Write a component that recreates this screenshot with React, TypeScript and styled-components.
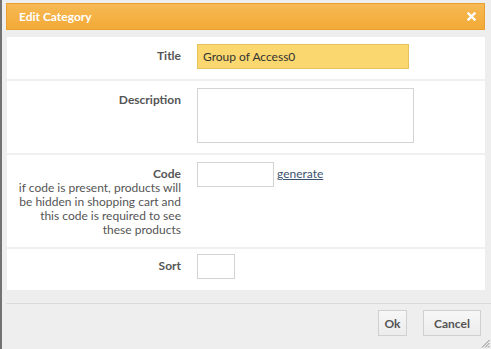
import React from "react";
import styled, { createGlobalStyle } from "styled-components";

const GlobalStyle = createGlobalStyle`
  html, body {
    margin: 0;
    padding: 0;
    background: #eeeeee;
  }
  body {
    font-family: Lato, "Open Sans", "Liberation Sans", sans-serif;
    font-size: 12px;
    color: #555;
  }
`;

function App(): JSX.Element {
  return (
    <React.Fragment>
      <GlobalStyle />
      <Frame>
        <Header>
          <HeaderTitle>Edit Category</HeaderTitle>
          <CloseButton aria-label="close">
            <svg width="9" height="9" viewBox="0 0 9 9">
              <path
                d="M1.5 1.5 L7.5 7.5 M7.5 1.5 L1.5 7.5"
                stroke="#fff"
                strokeWidth="2.4"
                strokeLinecap="square"
              />
            </svg>
          </CloseButton>
        </Header>

        <Panel>
          <Row>
            <LabelCell>
              <Label>Title</Label>
            </LabelCell>
            <FieldCell>
              <TextInput $width={212} $highlight defaultValue="Group of Access0" />
            </FieldCell>
          </Row>

          <Row>
            <LabelCell>
              <Label>Description</Label>
            </LabelCell>
            <FieldCell>
              <TextArea />
            </FieldCell>
          </Row>

          <Row>
            <LabelCell>
              <Label>Code</Label>
              <Hint>
                if code is present, products will be hidden in shopping cart
                and this code is required to see these products
              </Hint>
            </LabelCell>
            <FieldCell>
              <TextInput $width={77} />
              <GenerateLink href="#">generate</GenerateLink>
            </FieldCell>
          </Row>

          <Row $last>
            <LabelCell>
              <Label>Sort</Label>
            </LabelCell>
            <FieldCell>
              <TextInput $width={38} />
            </FieldCell>
          </Row>
        </Panel>

        <Footer>
          <Button $width={29}>Ok</Button>
          <Button $width={58}>Cancel</Button>
          <Grip>
            <svg width="9" height="9" viewBox="0 0 9 9">
              <path
                d="M8.5 1 L1 8.5 M8.5 4 L4 8.5 M8.5 7 L7 8.5"
                stroke="#888"
                strokeWidth="1"
              />
            </svg>
          </Grip>
        </Footer>
      </Frame>
    </React.Fragment>
  );
}

export default App;

const Frame = styled.div`
  position: relative;
  box-sizing: border-box;
  width: 491px;
  height: 349px;
  border-left: 2px solid #727272;
  padding: 3px 6px 0 4px;
  background: #eeeeee;
  overflow: hidden;
`;

const Header = styled.div`
  display: flex;
  align-items: center;
  justify-content: space-between;
  box-sizing: border-box;
  height: 27px;
  padding: 0 8px 0 12px;
  border: 1px solid #e9a030;
  background: linear-gradient(#f6b954, #f3aa37);
`;

const HeaderTitle = styled.span`
  color: #fff;
  font-weight: 700;
  font-size: 12px;
`;

const CloseButton = styled.span`
  display: flex;
  align-items: center;
`;

const Panel = styled.div`
  margin: 7px 0 0 1px;
  background: #fff;
`;

const Row = styled.div<{ $last?: boolean }>`
  display: flex;
  gap: 16px;
  padding: ${(p) => (p.$last ? "5px 0 11px" : "7px 0 10px")};
  border-bottom: ${(p) => (p.$last ? "none" : "2px solid #f0f0f0")};
`;

const LabelCell = styled.div`
  box-sizing: border-box;
  width: 174px;
  padding-top: 5px;
  text-align: right;
  line-height: 14px;
`;

const Label = styled.div`
  font-weight: 700;
  color: #555;
`;

const Hint = styled.div`
  color: #555;
  padding-left: 10px;
`;

const FieldCell = styled.div`
  display: flex;
  align-items: flex-start;
  gap: 3px;
`;

const TextInput = styled.input<{ $width: number; $highlight?: boolean }>`
  box-sizing: border-box;
  width: ${(p) => p.$width}px;
  height: 25px;
  padding: 0 5px;
  font: inherit;
  color: #333;
  border: 1px solid ${(p) => (p.$highlight ? "#e5c25a" : "#d4d4d4")};
  background: ${(p) => (p.$highlight ? "#fbd86f" : "#fff")};
  outline: none;
`;

const TextArea = styled.textarea`
  box-sizing: border-box;
  width: 217px;
  height: 55px;
  border: 1px solid #d4d4d4;
  resize: none;
  font: inherit;
  outline: none;
`;

const GenerateLink = styled.a`
  margin-top: 5px;
  color: #3b5270;
  text-decoration: underline;
  line-height: 14px;
`;

const Footer = styled.div`
  display: flex;
  justify-content: flex-end;
  gap: 16px;
  margin-top: 13px;
  margin-right: -6px;
  padding: 6px 10px 0 0;
  border-top: 1px solid #d9d9d9;
`;

const Button = styled.button<{ $width: number }>`
  box-sizing: border-box;
  width: ${(p) => p.$width}px;
  height: 26px;
  padding: 0;
  font: inherit;
  font-weight: 700;
  color: #555;
  border: 1px solid #d0d0d0;
  background: linear-gradient(#f7f7f7, #ececec);
`;

const Grip = styled.span`
  position: absolute;
  right: 1px;
  bottom: 1px;
  display: flex;
`;
